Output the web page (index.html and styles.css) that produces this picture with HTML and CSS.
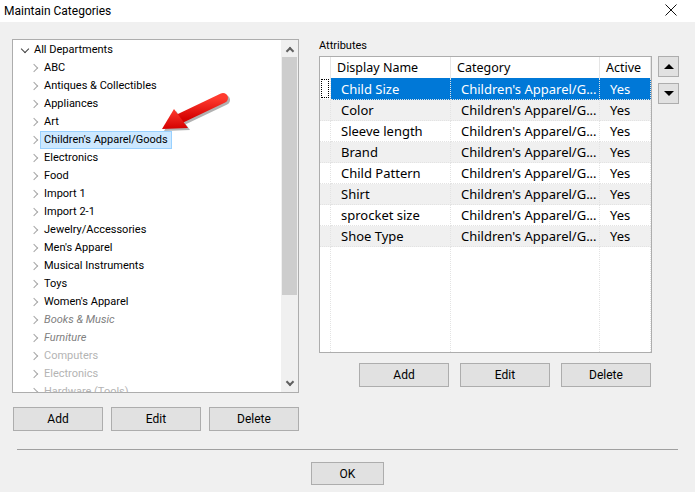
FILE: index.html
```html
<!DOCTYPE html>
<html lang="en">
<head>
    <meta charset="UTF-8">
    <title>Maintain Categories</title>
    <link rel="stylesheet" href="styles.css">
</head>
<body>
    <div class="window">
        <div class="titlebar">
            <span class="title">Maintain Categories</span>
            <svg class="close" width="12" height="12" viewBox="0 0 12 12">
                <path d="M0.5 0.5 L11.5 11.5 M11.5 0.5 L0.5 11.5" stroke="#111" stroke-width="1"/>
            </svg>
        </div>

        <div class="content">
            <div class="left-pane">
                <div class="tree">
                    <div class="tree-list">
                        <div class="node root"><span class="chev down"></span>All Departments</div>
                        <div class="node"><span class="chev"></span>ABC</div>
                        <div class="node"><span class="chev"></span>Antiques &amp; Collectibles</div>
                        <div class="node"><span class="chev"></span>Appliances</div>
                        <div class="node"><span class="chev"></span>Art</div>
                        <div class="node"><span class="chev"></span><span class="picked">Children's Apparel/Goods</span></div>
                        <div class="node"><span class="chev"></span>Electronics</div>
                        <div class="node"><span class="chev"></span>Food</div>
                        <div class="node"><span class="chev"></span>Import 1</div>
                        <div class="node"><span class="chev"></span>Import 2-1</div>
                        <div class="node"><span class="chev"></span>Jewelry/Accessories</div>
                        <div class="node"><span class="chev"></span>Men's Apparel</div>
                        <div class="node"><span class="chev"></span>Musical Instruments</div>
                        <div class="node"><span class="chev"></span>Toys</div>
                        <div class="node"><span class="chev"></span>Women's Apparel</div>
                        <div class="node hidden-cat"><span class="chev"></span>Books &amp; Music</div>
                        <div class="node hidden-cat"><span class="chev"></span>Furniture</div>
                        <div class="node inactive"><span class="chev"></span>Computers</div>
                        <div class="node inactive"><span class="chev"></span>Electronics</div>
                        <div class="node inactive"><span class="chev"></span>Hardware (Tools)</div>
                    </div>
                    <div class="vscroll">
                        <div class="sb-btn"><span class="sb-arrow up"></span></div>
                        <div class="sb-track"><div class="sb-thumb"></div></div>
                        <div class="sb-btn"><span class="sb-arrow dn"></span></div>
                    </div>
                    <!-- red pointer over the selected department -->
                    <svg class="pointer" width="80" height="50" viewBox="150 88 80 50">
                        <defs>
                            <linearGradient id="redGrad" x1="0" y1="0" x2="0" y2="1">
                                <stop offset="0" stop-color="#ff3b2f"/>
                                <stop offset="1" stop-color="#d40000"/>
                            </linearGradient>
                        </defs>
                        <g transform="translate(2 2)" opacity="0.3">
                            <line x1="179" y1="119" x2="223" y2="98" stroke="#000" stroke-width="10" stroke-linecap="round"/>
                            <polygon points="162,129 174,109 188,128" fill="#000"/>
                        </g>
                        <line x1="179" y1="119" x2="223" y2="98" stroke="url(#redGrad)" stroke-width="10" stroke-linecap="round"/>
                        <polygon points="162,129 174,109 188,128" fill="url(#redGrad)"/>
                    </svg>
                </div>
                <div class="btn-row tree-btns">
                    <button class="btn">Add</button>
                    <button class="btn">Edit</button>
                    <button class="btn">Delete</button>
                </div>
            </div>

            <div class="right-pane">
                <div class="group-label">Attributes</div>
                <div class="attr-body">
                    <div class="grid">
                        <table class="attr-table">
                            <colgroup>
                                <col class="c-head">
                                <col class="c-name">
                                <col class="c-cat">
                                <col class="c-active">
                                <col class="c-pad">
                            </colgroup>
                            <thead>
                                <tr>
                                    <th></th>
                                    <th>Display Name</th>
                                    <th>Category</th>
                                    <th>Active</th>
                                    <th class="pad"></th>
                                </tr>
                            </thead>
                            <tbody>
                                <tr class="sel">
                                    <td class="rh"><span class="focus"></span></td>
                                    <td>Child Size</td><td>Children's Apparel/G...</td><td>Yes</td><td class="pad"></td>
                                </tr>
                                <tr class="alt">
                                    <td class="rh"></td>
                                    <td>Color</td><td>Children's Apparel/G...</td><td>Yes</td><td class="pad"></td>
                                </tr>
                                <tr>
                                    <td class="rh"></td>
                                    <td>Sleeve length</td><td>Children's Apparel/G...</td><td>Yes</td><td class="pad"></td>
                                </tr>
                                <tr class="alt">
                                    <td class="rh"></td>
                                    <td>Brand</td><td>Children's Apparel/G...</td><td>Yes</td><td class="pad"></td>
                                </tr>
                                <tr>
                                    <td class="rh"></td>
                                    <td>Child Pattern</td><td>Children's Apparel/G...</td><td>Yes</td><td class="pad"></td>
                                </tr>
                                <tr class="alt">
                                    <td class="rh"></td>
                                    <td>Shirt</td><td>Children's Apparel/G...</td><td>Yes</td><td class="pad"></td>
                                </tr>
                                <tr>
                                    <td class="rh"></td>
                                    <td>sprocket size</td><td>Children's Apparel/G...</td><td>Yes</td><td class="pad"></td>
                                </tr>
                                <tr class="alt">
                                    <td class="rh"></td>
                                    <td>Shoe Type</td><td>Children's Apparel/G...</td><td>Yes</td><td class="pad"></td>
                                </tr>
                                <tr class="filler">
                                    <td class="rh"></td><td></td><td></td><td></td><td class="pad"></td>
                                </tr>
                            </tbody>
                        </table>
                    </div>
                    <div class="move-btns">
                        <button class="btn move"><span class="tri up"></span></button>
                        <button class="btn move"><span class="tri dn"></span></button>
                    </div>
                </div>
                <div class="btn-row attr-btns">
                    <button class="btn">Add</button>
                    <button class="btn">Edit</button>
                    <button class="btn">Delete</button>
                </div>
            </div>
        </div>

        <div class="separator"></div>

        <div class="footer">
            <button class="btn ok">OK</button>
        </div>
    </div>
</body>
</html>
```

FILE: styles.css
```css
* {
    box-sizing: border-box;
}

body {
    margin: 0;
    background-color: #f0f0f0;
    font-family: Roboto, "Noto Sans", Arial, sans-serif;
    font-size: 12px;
    color: #000;
}

.window {
    width: 695px;
    height: 492px;
    overflow: hidden;
}

.titlebar {
    height: 22px;
    background-color: #fff;
    display: flex;
    align-items: center;
    justify-content: space-between;
    padding: 0 18px 1px 4px;
}

.title {
    font-size: 12px;
}

.close {
    margin-top: -1px;
}

.content {
    display: flex;
    gap: 20px;
    padding: 17px 0 0 12px;
}

/* ---------- department tree ---------- */

.left-pane {
    width: 287px;
}

.tree {
    position: relative;
    height: 354px;
    border: 1px solid #adadad;
    background-color: #fff;
    display: flex;
    overflow: hidden;
    font-size: 11px;
}

.tree-list {
    flex: 1;
    padding-top: 1px;
}

.node {
    height: 18px;
    line-height: 18px;
    display: flex;
    align-items: center;
    padding-left: 18px;
    white-space: nowrap;
}

.node.root {
    padding-left: 7px;
}

.chev {
    width: 6px;
    height: 6px;
    border-right: 1.5px solid #a6a6a6;
    border-bottom: 1.5px solid #a6a6a6;
    transform: rotate(-45deg);
    margin-right: 7px;
}

.chev.down {
    border-color: #404040;
    transform: rotate(45deg);
    margin: -3px 6px 0 2px;
}

.picked {
    background-color: #cce8ff;
    border: 1px solid #99d1ff;
    padding: 0 3px 0 3px;
    margin-left: -4px;
    line-height: 16px;
}

.hidden-cat {
    font-style: italic;
    color: #808080;
}

.inactive {
    color: #b4b4b4;
}

.vscroll {
    width: 17px;
    display: flex;
    flex-direction: column;
    background-color: #f0f0f0;
}

.sb-btn {
    height: 17px;
    display: flex;
    align-items: center;
    justify-content: center;
}

.sb-arrow {
    width: 6px;
    height: 6px;
    border-left: 2px solid #606060;
    border-top: 2px solid #606060;
}

.sb-arrow.up {
    transform: rotate(45deg);
    margin-top: 4px;
}

.sb-arrow.dn {
    transform: rotate(-135deg);
    margin-top: -4px;
}

.sb-track {
    flex: 1;
    padding: 0 1px;
}

.sb-thumb {
    height: 238px;
    background-color: #cdcdcd;
}

.pointer {
    position: absolute;
    left: 137px;
    top: 48px;
    pointer-events: none;
}

/* ---------- buttons ---------- */

.btn-row {
    display: flex;
}

.btn {
    font-family: inherit;
    font-size: 12px;
    height: 24px;
    width: 90px;
    padding: 0;
    color: #000;
    background-color: #e1e1e1;
    border: 1px solid #adadad;
    border-radius: 0;
}

.tree-btns {
    margin-top: 14px;
    padding-left: 1px;
    gap: 8px;
}

.attr-btns {
    margin-top: 10px;
    padding-left: 40px;
    gap: 11px;
}

/* ---------- attributes grid ---------- */

.right-pane {
    width: 360px;
}

.group-label {
    height: 17px;
    line-height: 13px;
    font-size: 11px;
}

.attr-body {
    display: flex;
    gap: 6px;
}

.grid {
    width: 334px;
    height: 297px;
    border: 1px solid #adadad;
    background-color: #fff;
    overflow: hidden;
}

.attr-table {
    width: 332px;
    height: 295px;
    table-layout: fixed;
    border-collapse: separate;
    border-spacing: 0;
    font-family: "Noto Sans", Arial, sans-serif;
    font-size: 13px;
}

.c-head { width: 11px; }
.c-name { width: 120px; }
.c-cat { width: 149px; }
.c-active { width: 51px; }
.c-pad { width: 1px; }

.attr-table th {
    height: 21px;
    font-weight: normal;
    text-align: left;
    padding: 0 0 0 6px;
    border-right: 1px solid #e5e5e5;
    white-space: nowrap;
    font-size: 12.5px;
}

.attr-table td {
    height: 21px;
    padding: 0 0 0 10px;
    border-right: 1px dotted #e3e3e3;
    border-bottom: 1px dotted #e3e3e3;
    white-space: nowrap;
    overflow: hidden;
}

.attr-table th.pad,
.attr-table td.pad {
    border: none;
    padding: 0;
    background-color: #fff;
}

.attr-table td.rh {
    padding: 0;
    border-right: 1px dotted #e3e3e3;
}

.attr-table tr.alt td {
    background-color: #f0f0f0;
}

.attr-table tr.sel td {
    background-color: #0078d7;
    color: #fff;
}

.attr-table tr.sel td.rh {
    background-color: #fff;
    padding: 1px;
}

.focus {
    display: block;
    height: 19px;
    border: 1px dotted #000;
}

.attr-table tr.filler td {
    height: auto;
    border-bottom: none;
}

.move-btns {
    display: flex;
    flex-direction: column;
    gap: 6px;
}

.btn.move {
    width: 21px;
    height: 21px;
    display: flex;
    align-items: center;
    justify-content: center;
}

.tri {
    width: 0;
    height: 0;
    border-left: 5px solid transparent;
    border-right: 5px solid transparent;
}

.tri.up {
    border-bottom: 5px solid #000;
}

.tri.dn {
    border-top: 5px solid #000;
}

/* ---------- footer ---------- */

.separator {
    margin: 18px 17px 0 17px;
    height: 1px;
    background-color: #a0a0a0;
}

.footer {
    display: flex;
    justify-content: center;
    padding-top: 12px;
}

.btn.ok {
    width: 73px;
    height: 23px;
}
```
